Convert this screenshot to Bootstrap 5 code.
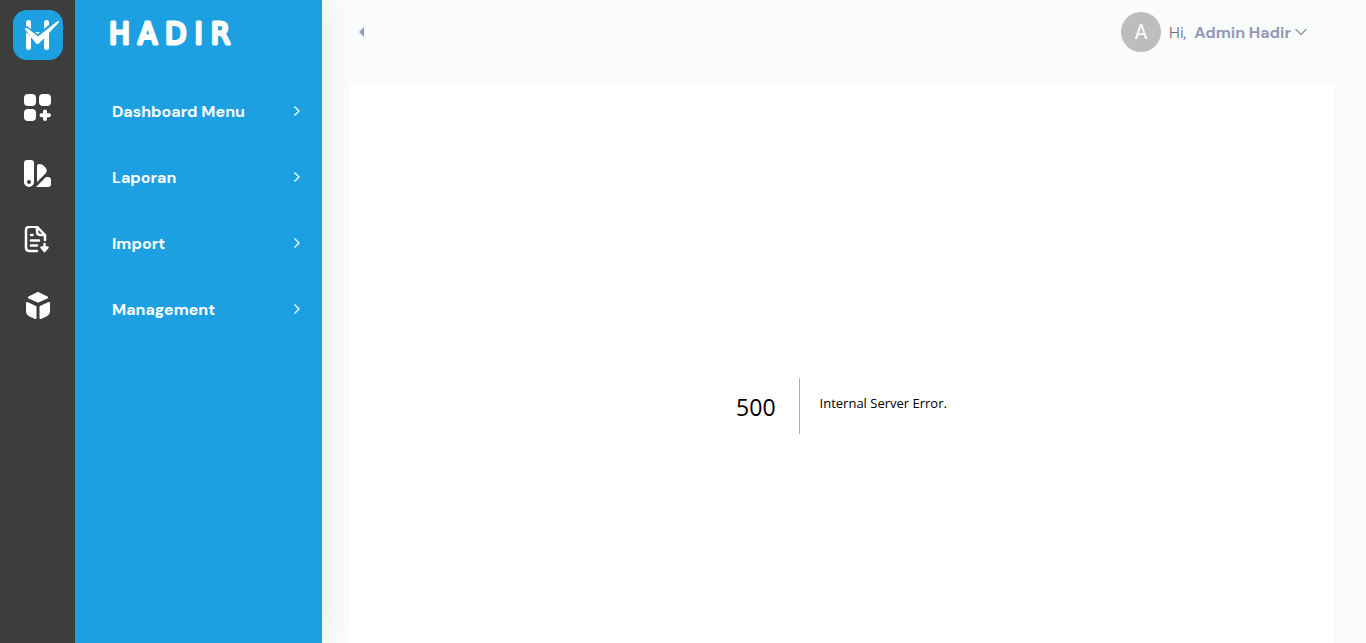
<!DOCTYPE html>
<html lang="id">
<head>
<meta charset="utf-8">
<meta name="viewport" content="width=device-width, initial-scale=1">
<title>Hadir</title>
<link href="https://cdn.jsdelivr.net/npm/bootstrap@5.3.0/dist/css/bootstrap.min.css" rel="stylesheet">
<style>
body { background: #fafcfb; font-family: "DM Sans", "Inter", sans-serif; font-size: 16px; }
.rail { width: 75px; background: #3d3d3d; }
.rail-logo { margin-top: 10px; }
.rail-icons { padding-top: 15px; }
.rail-icons a, .side-menu a { height: 66px; }
.panel-blue { width: 247px; background: #1ca0e2; box-shadow: 0 0 28px rgba(82, 90, 101, .12); clip-path: inset(0 -30px 0 0); }
.wordmark { height: 78px; padding: 4px 0 0 34px; }
.wordmark text { font: 31px "DejaVu Sans Condensed", "Lato", sans-serif; letter-spacing: 8px; fill: #fff; }
.side-menu a { padding: 0 20px 0 37px; color: #fff; font-weight: 700; }
.side-menu span, .user-hi, .user-name span { padding-top: 2px; }
.topbar { height: 64px; padding: 0 59px 0 36px; }
.avatar { width: 40px; height: 40px; background: #bdbdbd; font: 20px "Roboto", sans-serif; }
.user-name { color: #9299b8; font-weight: 700; }
.user-hi { color: #6b7080; font-weight: 300; }
.content-pad { padding: 20px 32px 0 27px; }
.error-page { min-height: 100vh; font-family: "Open Sans", sans-serif; color: #000; }
.error-code { font-size: 23px; line-height: 58px; padding-right: 23px; border-right: 1px solid #b0b0b0; height: 56px; }
.error-text { font-size: 13px; line-height: 50px; padding-left: 20px; height: 56px; }
</style>
</head>
<body>
<div class="d-flex vh-100 overflow-hidden">
  <nav class="rail d-flex flex-column align-items-center flex-shrink-0" aria-label="Modul">
    <a href="#" class="rail-logo" aria-label="Hadir">
      <svg class="d-block" width="50" height="50" viewBox="0 0 50 50"><rect width="50" height="50" rx="14" fill="#1ca0e2"/><path d="M15.500 12.500V37.500M33.500 12.500V37.500" fill="none" stroke="#fff" stroke-width="5" stroke-linecap="round"/><path d="M21.500 22H27.500L25 24.500Z" fill="#fff"/><path d="M12 18L24.500 28L44 12" fill="none" stroke="#1ca0e2" stroke-width="6"/><path d="M12 19.500Q12 16.500 15 18.500L25 26.500L44 11.500Q47.500 10 45 13.500L26 33.500Q24.500 35 23 33.500Z" fill="#fff"/></svg>
    </a>
    <div class="rail-icons d-flex flex-column">
      <a href="#" class="d-flex align-items-center" aria-label="Dashboard Menu"><svg width="28" height="28" viewBox="0 0 28 28" fill="#fff"><rect x="0" y="0" width="12" height="12" rx="4"/><rect x="15" y="0" width="12" height="12" rx="4"/><rect x="0" y="15" width="12" height="12" rx="4"/><path d="M21 17.500V25M17.500 21.200H25" stroke="#fff" stroke-width="4" stroke-linecap="round"/></svg></a>
      <a href="#" class="d-flex align-items-center" aria-label="Laporan"><svg width="28" height="28" viewBox="0 0 28 28" fill="#fff"><path fill-rule="evenodd" d="M3 0H7Q10 0 10 3V22A5 5 0 0 1 0 22V3Q0 0 3 0ZM5 20A2 2 0 1 0 5 24A2 2 0 1 0 5 20Z"/><path d="M13 6Q13 4 15 4Q18 3.500 21 7Q24 10 22 13L13 22Z"/><path d="M12 27L22 17H24Q27 17 27 20V24Q27 27 24 27Z"/></svg></a>
      <a href="#" class="d-flex align-items-center" aria-label="Import"><svg width="28" height="28" viewBox="0 0 28 28" fill="none" stroke="#fff" stroke-width="2.500" stroke-linecap="round" stroke-linejoin="round"><path d="M13 25H5.500Q2 25 2 21.500V4Q2 .8 5.500 .8H13L21 9V14M13 1V5.500Q13 9 16.500 9H21M7 9H8.500M7 14.500H15M7 19.500H13M20.500 18V22"/><path d="M17.500 21.500H23.500L20.500 25Z" fill="#fff"/></svg></a>
      <a href="#" class="d-flex align-items-center" aria-label="Management"><svg width="28" height="28" viewBox="0 0 28 28" fill="#fff" stroke="#fff" stroke-width="2" stroke-linejoin="round"><path d="M5 5.500L14 1L23 5.500L14 9.500Z"/><path d="M3 11L11.500 15V26L6 23.500Q3 22 3 19Z"/><path d="M25 11L16.500 15V26L22 23.500Q25 22 25 19Z"/></svg></a>
    </div>
  </nav>
  <aside class="panel-blue flex-shrink-0">
    <div class="wordmark"><svg class="d-block" width="190" height="60"><text x="0" y="40" stroke="#fff" stroke-width="3" stroke-linejoin="round">HADIR</text></svg></div>
    <nav class="side-menu" aria-label="Menu utama">
      <a href="#" class="d-flex align-items-center justify-content-between text-decoration-none"><span>Dashboard Menu</span><svg width="10" height="12" fill="none" stroke="#fff" stroke-width="1.300"><path d="M2.500 1.500L7 6L2.500 10.500"/></svg></a>
      <a href="#" class="d-flex align-items-center justify-content-between text-decoration-none"><span>Laporan</span><svg width="10" height="12" fill="none" stroke="#fff" stroke-width="1.300"><path d="M2.500 1.500L7 6L2.500 10.500"/></svg></a>
      <a href="#" class="d-flex align-items-center justify-content-between text-decoration-none"><span>Import</span><svg width="10" height="12" fill="none" stroke="#fff" stroke-width="1.300"><path d="M2.500 1.500L7 6L2.500 10.500"/></svg></a>
      <a href="#" class="d-flex align-items-center justify-content-between text-decoration-none"><span>Management</span><svg width="10" height="12" fill="none" stroke="#fff" stroke-width="1.300"><path d="M2.500 1.500L7 6L2.500 10.500"/></svg></a>
    </nav>
  </aside>
  <div class="flex-grow-1">
    <header class="topbar d-flex align-items-center justify-content-between">
      <button type="button" class="btn p-0 border-0 d-flex" aria-label="Tutup menu"><svg width="8" height="10"><path d="M6 0V10L1 5Z" fill="#9299b8"/></svg></button>
      <button type="button" class="btn p-0 border-0 d-flex align-items-center gap-2">
        <span class="avatar rounded-circle text-white d-flex align-items-center justify-content-center">A</span>
        <span class="user-hi">Hi,</span>
        <span class="user-name d-flex align-items-center gap-1"><span>Admin Hadir</span><svg width="12" height="8" fill="none" stroke="#9299b8" stroke-width="1.500" stroke-linecap="round"><path d="M1 1.500L6 6.500L11 1.500"/></svg></span>
      </button>
    </header>
    <main class="content-pad">
      <section class="error-page bg-white d-flex align-items-center justify-content-center">
        <div class="error-code">500</div>
        <div class="error-text">Internal Server Error.</div>
      </section>
    </main>
  </div>
</div>
<script src="https://cdn.jsdelivr.net/npm/bootstrap@5.3.0/dist/js/bootstrap.bundle.min.js"></script>
</body>
</html>
